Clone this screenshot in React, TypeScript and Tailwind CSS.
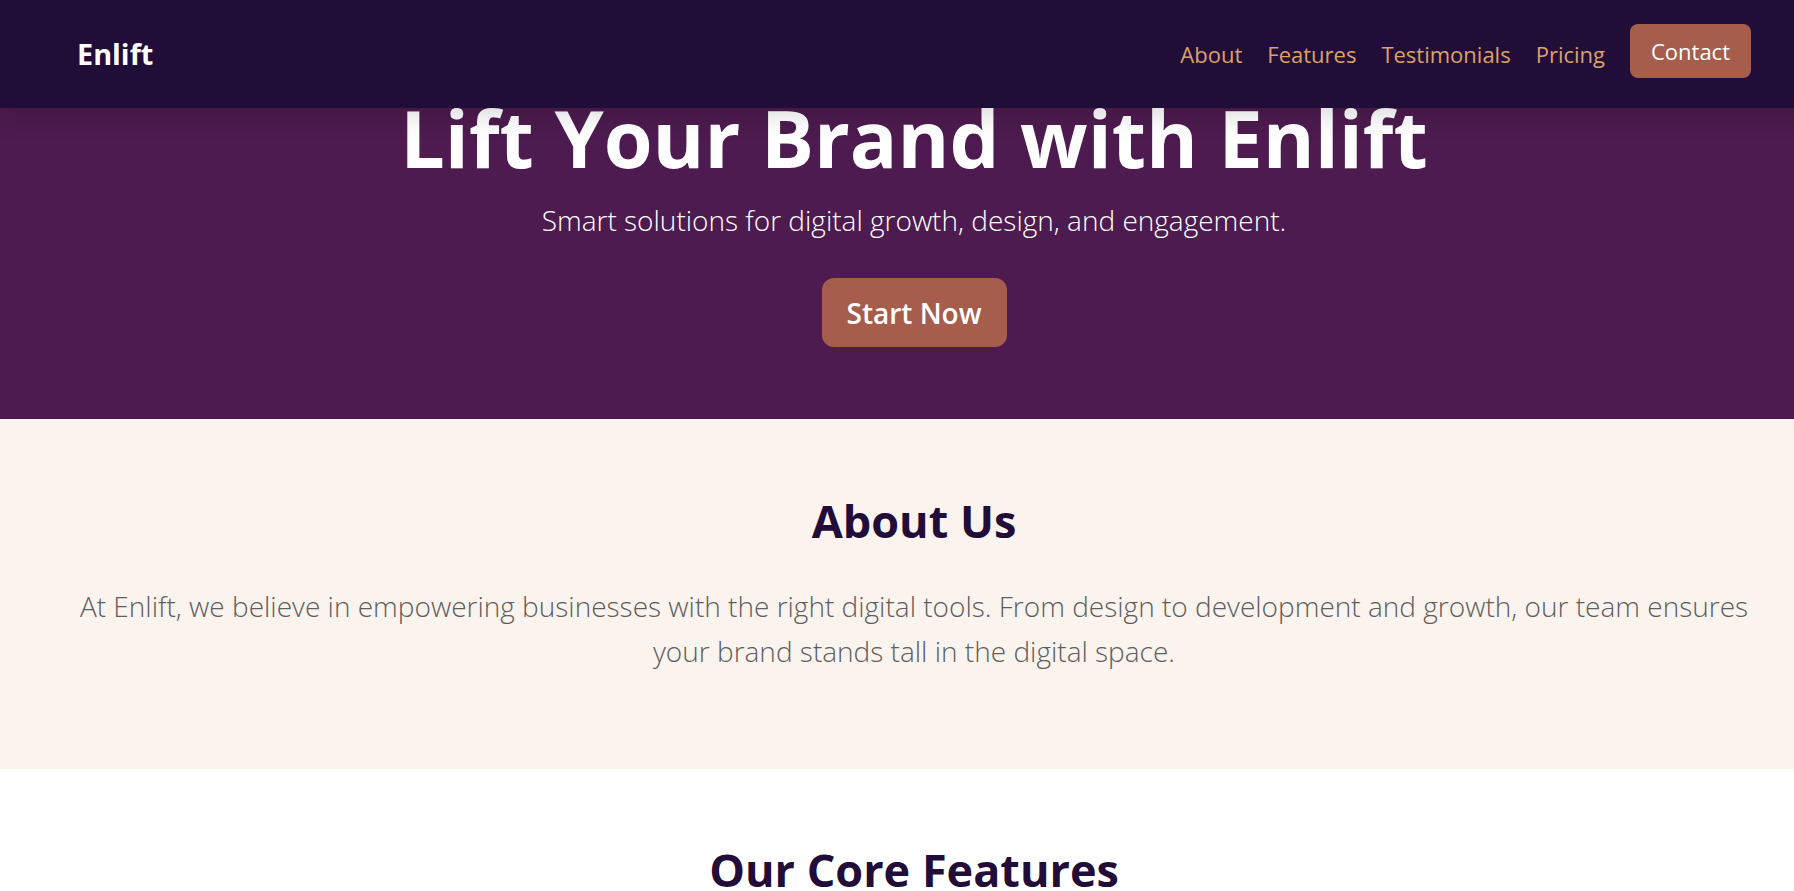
import React from "react";

const navLinks = ["About", "Features", "Testimonials", "Pricing"];

export default function App() {
  return (
    <div className="w-full min-h-screen overflow-hidden bg-white font-['Open_Sans',sans-serif]">
      <div className="relative w-[1828px]">
        <header className="absolute top-0 left-0 right-0 z-10 flex h-[108px] items-center justify-between bg-[#210e38] px-[77px] shadow-[0_4px_28px_rgba(0,0,0,0.18)]">
          <div className="text-[28.8px] font-bold leading-none text-white">Enlift</div>
          <nav className="mb-[6px] flex items-center gap-[25px]">
            {navLinks.map((l) => (
              <a key={l} href="#" className="mt-[6px] text-[22px] leading-none text-[#dca06a]">
                {l}
              </a>
            ))}
            <a
              href="#"
              className="flex h-[54px] items-center rounded-lg bg-[#a65d4c] px-[21px] text-[22px] leading-none text-white"
            >
              Contact
            </a>
          </nav>
        </header>

        <section className="flex h-[419px] flex-col items-center bg-[#4d1b4f] pt-[90px] text-center">
          <h1 className="text-[79px] font-bold leading-[95px] text-white">Lift Your Brand with Enlift</h1>
          <p className="mt-[14px] text-[28px] font-light leading-[42px] text-white">
            Smart solutions for digital growth, design, and engagement.
          </p>
          <a
            href="#"
            className="mt-[37px] flex h-[69px] items-center rounded-xl bg-[#a65d4c] px-[25px] text-[28px] font-semibold leading-none text-white"
          >
            Start Now
          </a>
        </section>

        <section className="bg-[#faf3ee] px-[77px] pt-[75px] pb-[95px] text-center">
          <h2 className="text-[45px] font-bold leading-[54px] text-[#210d38]">About Us</h2>
          <p className="mt-[36px] text-[28px] font-light leading-[45px] text-[#5e5e5e]">
            At Enlift, we believe in empowering businesses with the right digital tools. From design to development and
            growth, our team ensures your brand stands tall in the digital space.
          </p>
        </section>

        <section className="bg-white px-[77px] pt-[74px] pb-[80px] text-center">
          <h2 className="text-[45px] font-bold leading-[54px] text-[#210d38]">Our Core Features</h2>
        </section>
      </div>
    </div>
  );
}
